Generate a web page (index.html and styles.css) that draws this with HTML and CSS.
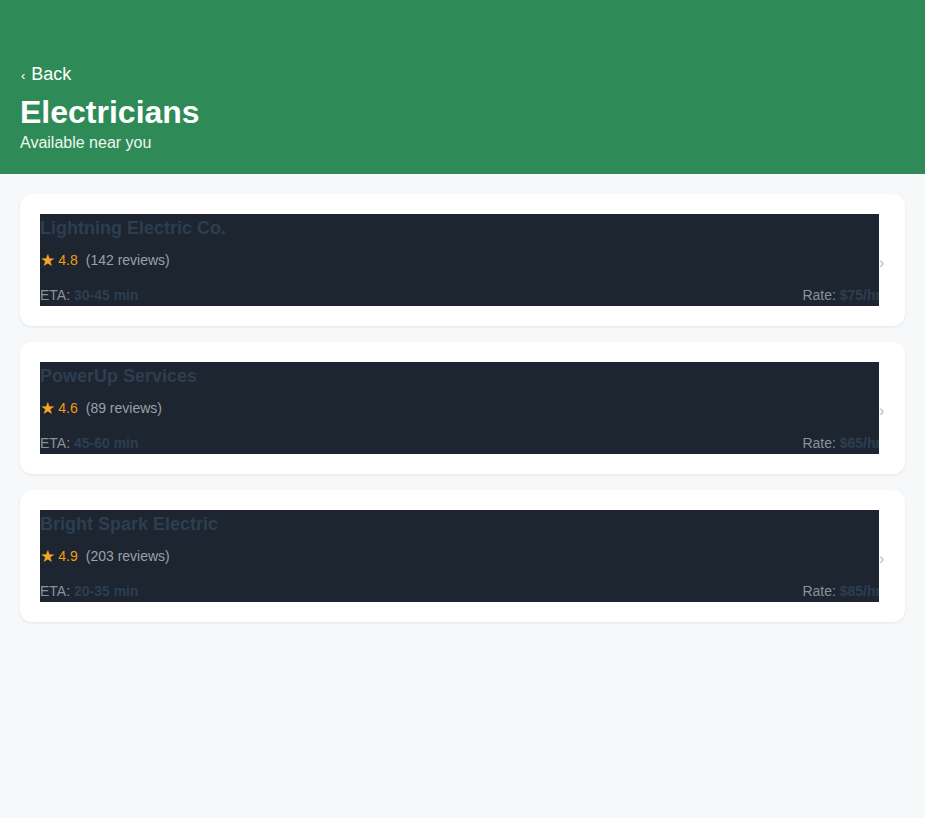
FILE: index.html
```html
<!DOCTYPE html>
<html>
<head>
<meta charset="utf-8">
<link rel="stylesheet" href="styles.css">
</head>
<body>
<header class="header">
  <div class="back"><span class="back-arrow">‹</span><span>Back</span></div>
  <h1 class="title">Electricians</h1>
  <div class="subtitle">Available near you</div>
</header>
<main class="list">
  <div class="card">
    <div class="info">
      <div class="name">Lightning Electric Co.</div>
      <div class="rating"><span class="star">★</span><span class="score">4.8</span><span class="reviews">(142 reviews)</span></div>
      <div class="meta"><span class="label">ETA: <b>30-45 min</b></span><span class="label rate">Rate: <b>$75/hr</b></span></div>
    </div>
    <span class="chev">›</span>
  </div>
  <div class="card">
    <div class="info">
      <div class="name">PowerUp Services</div>
      <div class="rating"><span class="star">★</span><span class="score">4.6</span><span class="reviews">(89 reviews)</span></div>
      <div class="meta"><span class="label">ETA: <b>45-60 min</b></span><span class="label rate">Rate: <b>$65/hr</b></span></div>
    </div>
    <span class="chev">›</span>
  </div>
  <div class="card">
    <div class="info">
      <div class="name">Bright Spark Electric</div>
      <div class="rating"><span class="star">★</span><span class="score">4.9</span><span class="reviews">(203 reviews)</span></div>
      <div class="meta"><span class="label">ETA: <b>20-35 min</b></span><span class="label rate">Rate: <b>$85/hr</b></span></div>
    </div>
    <span class="chev">›</span>
  </div>
</main>
</body>
</html>
```
FILE: styles.css
```css
* { box-sizing: border-box; }
html, body { margin: 0; padding: 0; }
body {
  background: #f7f8fa;
  font-family: "Liberation Sans", Arial, sans-serif;
  width: 925px;
  min-height: 818px;
}
.header {
  background: #2e8b57;
  color: #fff;
  padding: 62px 20px 21px;
}
.back {
  display: flex;
  align-items: center;
  height: 24px;
  font-size: 18px;
  line-height: 24px;
}
.back-arrow {
  font-size: 13px;
  line-height: 13px;
  margin-left: 1px;
  margin-right: 6px;
  position: relative;
  top: 1px;
}
.title {
  margin: 7px 0 0;
  font-size: 32px;
  line-height: 38px;
  font-weight: bold;
}
.subtitle {
  margin-top: 2px;
  font-size: 16px;
  line-height: 20px;
  color: #eef6f0;
}
.list {
  padding: 20px;
  display: flex;
  flex-direction: column;
  gap: 16px;
}
.card {
  background: #fff;
  border-radius: 12px;
  padding: 20px;
  display: flex;
  align-items: center;
  box-shadow: 0 1px 3px rgba(0,0,0,0.08);
}
.info {
  flex: 1;
  min-width: 0;
  background: #1d2530;
  height: 92px;
  overflow: hidden;
}
.name {
  font-size: 18px;
  font-weight: bold;
  line-height: 28px;
  color: #2c3e50;
}
.rating {
  margin-top: 8px;
  font-size: 14px;
  line-height: 20px;
  display: flex;
  align-items: center;
}
.star {
  color: #f5a623;
  font-family: "DejaVu Sans", sans-serif;
  font-size: 17px;
  line-height: 20px;
  margin-right: 3px;
}
.score { color: #f39c12; margin-right: 8px; }
.reviews { color: #9aa0a8; }
.meta {
  margin-top: 15px;
  display: flex;
  justify-content: space-between;
  font-size: 14px;
  line-height: 20px;
}
.label { color: #8a9199; }
.label b { color: #2c3e50; }
.rate { margin-right: -2px; }
.chev {
  color: #b8bcc2;
  font-size: 16px;
  width: 6px;
  position: relative;
  top: 3px;
}
```
